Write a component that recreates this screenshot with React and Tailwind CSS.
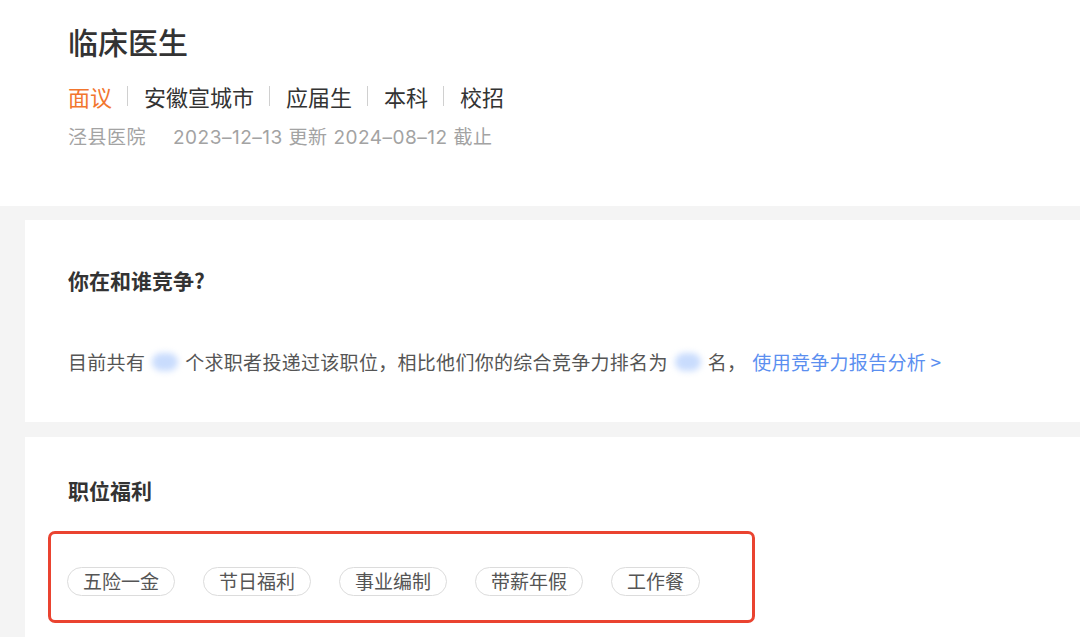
import React from "react";

const font = { fontFamily: '"Noto Sans CJK SC", "Noto Sans", sans-serif' };
const metaFont = { fontFamily: 'Inter, "Noto Sans CJK SC", sans-serif' };

function Blur() {
  return <span className="inline-block w-[26px] h-[18px] align-middle mx-[7px] rounded-full bg-[#c9dcfd] blur-[3px]" />;
}

function Sep() {
  return <span className="inline-block w-px h-[20px] bg-[#d0d0d0] ml-[15px] mr-[16px]" />;
}

export default function App() {
  const perks = ["五险一金", "节日福利", "事业编制", "带薪年假", "工作餐"];
  return (
    <div className="w-[1080px] h-[637px] overflow-hidden bg-white flex flex-col" style={font}>
      <div className="h-[206px] shrink-0 pl-[68px] pt-[21px] flex flex-col">
        <div className="text-[30px] leading-[40px] text-[#333] font-medium">临床医生</div>
        <div className="mt-[19px] flex items-center text-[22px] leading-[32px] text-[#333]">
          <span className="text-[#f2762e]">面议</span>
          <Sep />
          <span>安徽宣城市</span>
          <Sep />
          <span>应届生</span>
          <Sep />
          <span>本科</span>
          <Sep />
          <span>校招</span>
        </div>
        <div className="mt-[13px] flex items-center text-[19px] leading-[26px] text-[#a3a3a3] tracking-[0.5px]" style={metaFont}>
          <span>泾县医院</span>
          <span className="ml-[27px]">2023–12–13 更新 2024–08–12 截止</span>
        </div>
      </div>
      <div className="flex-1 bg-[#f4f4f4] pl-[25px] pt-[14px] flex flex-col gap-[15px]">
        <div className="bg-white h-[202px] shrink-0 pl-[43px] pt-[44px]">
          <div className="text-[21px] leading-[32px] font-bold text-[#333]">你在和谁竞争?</div>
          <div className="mt-[52px] flex items-center text-[19px] leading-[28px] text-[#555] tracking-[0.3px]">
            <span>目前共有</span>
            <Blur />
            <span>个求职者投递过该职位，相比他们你的综合竞争力排名为</span>
            <Blur />
            <span>名，</span>
            <span className="ml-[6px] text-[#5b8ff0]">使用竞争力报告分析 &gt;</span>
          </div>
        </div>
        <div className="bg-white flex-1 pl-[23px] pt-[37px]">
          <div className="pl-[20px] text-[21px] leading-[32px] font-bold text-[#333]">职位福利</div>
          <div className="mt-[25px] w-[707px] h-[92px] border-[3px] border-[#ea4330] rounded-[7px] pl-[16px] pt-[33px] flex gap-[28px] items-start">
            {perks.map((p) => (
              <span
                key={p}
                className="h-[29px] px-[15px] flex items-center rounded-full border border-[#dcdcdc] text-[19px] text-[#555]"
              >
                {p}
              </span>
            ))}
          </div>
        </div>
      </div>
    </div>
  );
}
